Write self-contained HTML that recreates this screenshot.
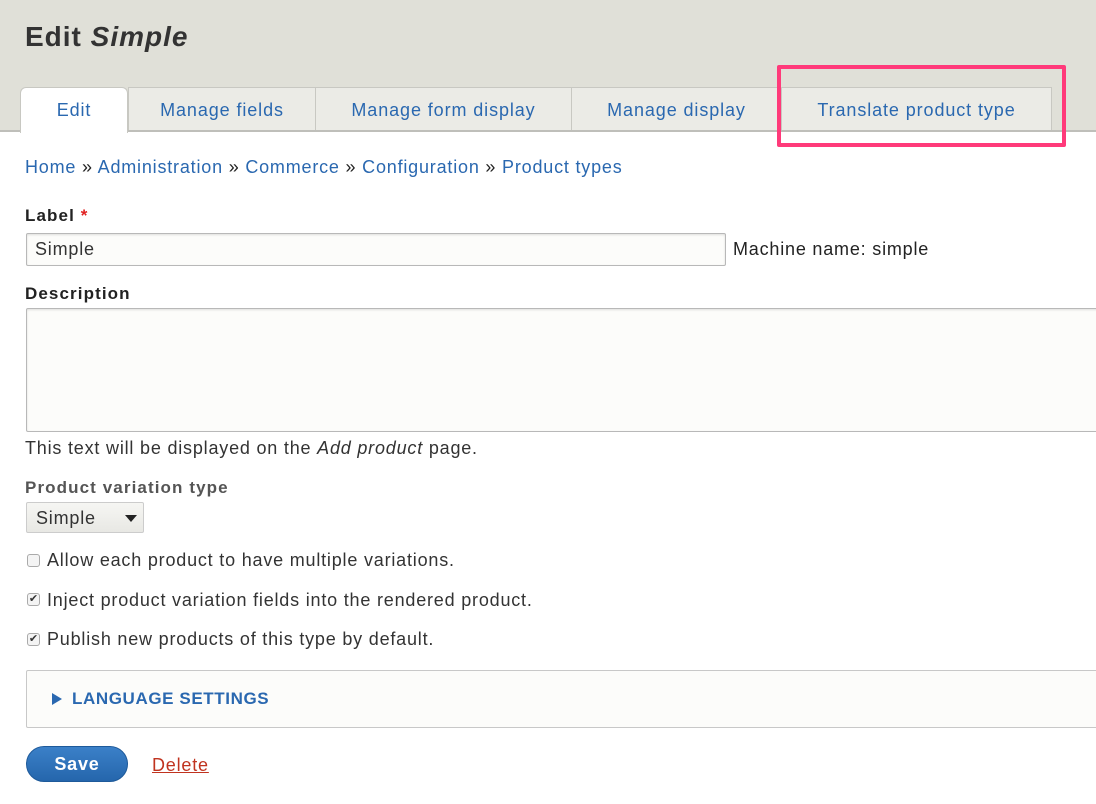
<!DOCTYPE html>
<html><head><style>
body{margin:0;width:1096px;height:804px;overflow:hidden;background:#fff;font-family:"Liberation Sans",sans-serif;color:#222;position:relative;letter-spacing:0.8px}
.hdr{position:absolute;left:0;top:0;width:1096px;height:130px;background:#e0e0d8;border-bottom:2px solid #bfbfba}
h1{position:absolute;left:25px;top:21px;margin:0;font-size:28px;font-weight:bold;color:#333;letter-spacing:1px}
.tab{position:absolute;top:87px;height:43px;background:#ebebe6;border:1px solid #c8c8c2;border-bottom:none;box-sizing:border-box;color:#2a68b0;font-size:18px;text-align:center;line-height:44px;letter-spacing:0.9px}
.tab.act{background:#fff;height:46px;border-radius:6px 6px 0 0}
.pink{position:absolute;left:777px;top:65px;width:289px;height:82px;border:4px solid #ff3a7a;box-sizing:border-box;border-radius:2px}
a{color:#2a68b0;text-decoration:none}
.t{position:absolute;font-size:18px;white-space:nowrap}
.b{font-weight:bold;font-size:17px;letter-spacing:1.1px}
.inp{position:absolute;border:1px solid #b8b8b8;border-radius:2px;background:#fcfcfa;box-sizing:border-box;box-shadow:inset 0 1px 2px rgba(0,0,0,.12)}
.cb{position:absolute;left:27px;width:13px;height:13px;border:1px solid #aaa;border-radius:3px;background:#f4f4f4;box-sizing:border-box;font-size:11px;line-height:11px;text-align:center;color:#333;letter-spacing:0}
</style></head><body>
<div class="hdr"></div>
<h1>Edit <i>Simple</i></h1>
<div class="tab" style="left:128px;width:188px">Manage fields</div>
<div class="tab" style="left:315px;width:257px">Manage form display</div>
<div class="tab" style="left:571px;width:211px">Manage display</div>
<div class="tab" style="left:781px;width:271px">Translate product type</div>
<div class="tab act" style="left:20px;width:108px">Edit</div>
<div class="pink"></div>
<div class="t" style="left:25px;top:157px"><a>Home</a> » <a>Administration</a> » <a>Commerce</a> » <a>Configuration</a> » <a>Product types</a></div>
<div class="t b" style="left:25px;top:206px">Label <span style="color:#e02020">*</span></div>
<div class="inp" style="left:26px;top:233px;width:700px;height:33px"></div>
<div class="t" style="left:35px;top:239px;color:#333">Simple</div>
<div class="t" style="left:733px;top:239px;color:#222">Machine name: simple</div>
<div class="t b" style="left:25px;top:284px">Description</div>
<div class="inp" style="left:26px;top:308px;width:1080px;height:124px"></div>
<div class="t" style="left:25px;top:438px;color:#333">This text will be displayed on the <i>Add product</i> page.</div>
<div class="t b" style="left:25px;top:478px;color:#555">Product variation type</div>
<div style="position:absolute;left:26px;top:502px;width:118px;height:31px;border:1px solid #ccc;border-radius:2px;background:linear-gradient(#f6f6f3,#e8e8e4);box-sizing:border-box"></div>
<div class="t" style="left:36px;top:508px;color:#333">Simple</div>
<div style="position:absolute;left:125px;top:515px;width:0;height:0;border-left:6px solid transparent;border-right:6px solid transparent;border-top:7px solid #222"></div>
<div class="cb" style="top:554px"></div><div class="t" style="left:47px;top:550px;color:#333">Allow each product to have multiple variations.</div>
<div class="cb" style="top:593px">✔</div><div class="t" style="left:47px;top:590px;color:#333">Inject product variation fields into the rendered product.</div>
<div class="cb" style="top:633px">✔</div><div class="t" style="left:47px;top:629px;color:#333">Publish new products of this type by default.</div>
<div style="position:absolute;left:26px;top:670px;width:1080px;height:58px;border:1px solid #c8c8c8;border-radius:2px;background:#fcfcfa;box-sizing:border-box"></div>
<div style="position:absolute;left:52px;top:693px;width:0;height:0;border-top:6px solid transparent;border-bottom:6px solid transparent;border-left:10px solid #2a68b0"></div>
<div class="t" style="left:72px;top:689px;color:#2a68b0;font-weight:bold;font-size:17px;letter-spacing:0.6px">LANGUAGE SETTINGS</div>
<div style="position:absolute;left:26px;top:746px;width:102px;height:36px;border-radius:18px;background:linear-gradient(#3b80c8,#2566ac);border:1px solid #1e5a9a;box-sizing:border-box;color:#fff;font-weight:bold;font-size:18px;text-align:center;line-height:34px">Save</div>
<div class="t" style="left:152px;top:755px;color:#c0331f;text-decoration:underline">Delete</div>
</body></html>
